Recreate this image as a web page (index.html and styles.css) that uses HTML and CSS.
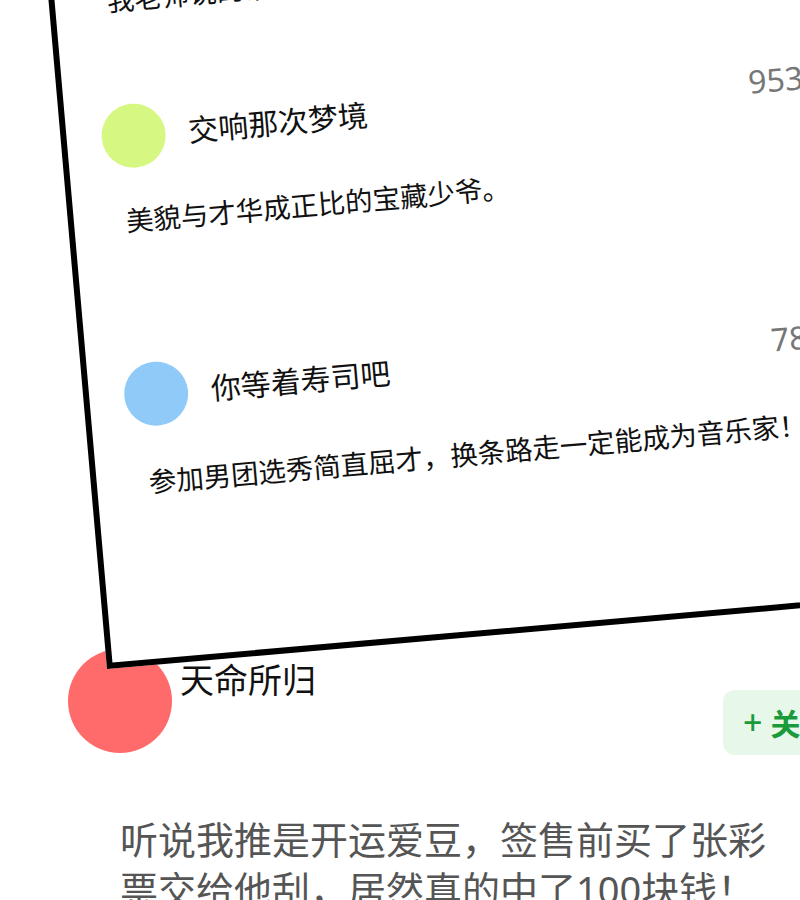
FILE: index.html
```html
<!DOCTYPE html>
<html lang="zh-CN">
<head>
<meta charset="utf-8">
<title>评论</title>
<link rel="stylesheet" href="styles.css">
</head>
<body>
<div class="stage">
  <div class="card-slot">
    <div class="card">
      <p class="cmt prev">我老师说的话果然没错</p>
      <div class="head head-1">
        <span class="av av-green"></span>
        <span class="name">交响那次梦境</span>
        <span class="count">953</span>
      </div>
      <p class="cmt cmt-1">美貌与才华成正比的宝藏少爷。</p>
      <div class="head head-2">
        <span class="av av-blue"></span>
        <span class="name">你等着寿司吧</span>
        <span class="count">78</span>
      </div>
      <p class="cmt cmt-2">参加男团选秀简直屈才，换条路走一定能成为音乐家！</p>
    </div>
  </div>
  <div class="post">
    <div class="post-head">
      <span class="post-av"></span>
      <span class="post-name">天命所归</span>
      <span class="follow"><span class="plus">+</span>关注</span>
    </div>
    <p class="post-text">听说我推是开运爱豆，签售前买了张彩票交给他刮，居然真的中了100块钱！</p>
  </div>
</div>
</body>
</html>
```
FILE: styles.css
```css
html, body {
  margin: 0;
  padding: 0;
  background: #fff;
}
body {
  font-family: "Noto Sans", "Noto Sans CJK SC", sans-serif;
  color: #111;
}
.stage {
  width: 800px;
  height: 900px;
  overflow: hidden;
  position: relative;
}
.card-slot {
  height: 649px;
  position: relative;
}
.card {
  position: absolute;
  left: 107px;
  top: -111px;
  width: 820px;
  height: 780px;
  box-sizing: border-box;
  border: 6px solid #000;
  background: #fff;
  transform-origin: bottom left;
  transform: rotate(-5deg);
  display: flex;
  flex-direction: column;
  justify-content: flex-end;
  padding: 0 0 158px 35px;
  z-index: 2;
}
.cmt {
  margin: 0 0 0 17px;
  font-size: 27.5px;
  line-height: 36px;
  white-space: nowrap;
  color: #111;
}
.prev { margin-bottom: 86px; }
.cmt-1 { margin-bottom: 124px; }
.head {
  display: grid;
  grid-template-columns: 64px 539px auto;
  column-gap: 23px;
  align-items: center;
  height: 64px;
}
.head-1 { margin-bottom: 35px; }
.head-2 { margin-bottom: 38px; }
.av {
  width: 64px;
  height: 64px;
  border-radius: 50%;
  display: block;
}
.av-green { background: #d6f883; }
.av-blue { background: #90caf9; }
.name {
  font-size: 30px;
  line-height: 40px;
  color: #111;
  white-space: nowrap;
}
.count {
  font-size: 32px;
  line-height: 40px;
  color: #777;
  white-space: nowrap;
}
.post {
  position: relative;
  z-index: 1;
}
.post-head {
  display: flex;
  align-items: flex-start;
  padding-left: 68px;
  height: 104px;
}
.post-av {
  width: 104px;
  height: 104px;
  border-radius: 50%;
  background: #ff6b6b;
  flex: none;
}
.post-name {
  font-size: 34px;
  line-height: 34px;
  margin: 14px 0 0 8px;
  color: #111;
  flex: 1;
}
.follow {
  margin-top: 41px;
  margin-right: -60px;
  height: 65px;
  width: 137px;
  box-sizing: border-box;
  padding-left: 20px;
  border-radius: 12px;
  background: #e7f8eb;
  color: #1a9a38;
  font-size: 30px;
  font-weight: 700;
  line-height: 65px;
  white-space: nowrap;
}
.plus {
  font-size: 34px;
  font-weight: 500;
  margin-right: 8px;
}
.post-text {
  margin: 61px 0 0 120px;
  width: 650px;
  font-size: 38px;
  line-height: 50px;
  color: #555;
}
```
